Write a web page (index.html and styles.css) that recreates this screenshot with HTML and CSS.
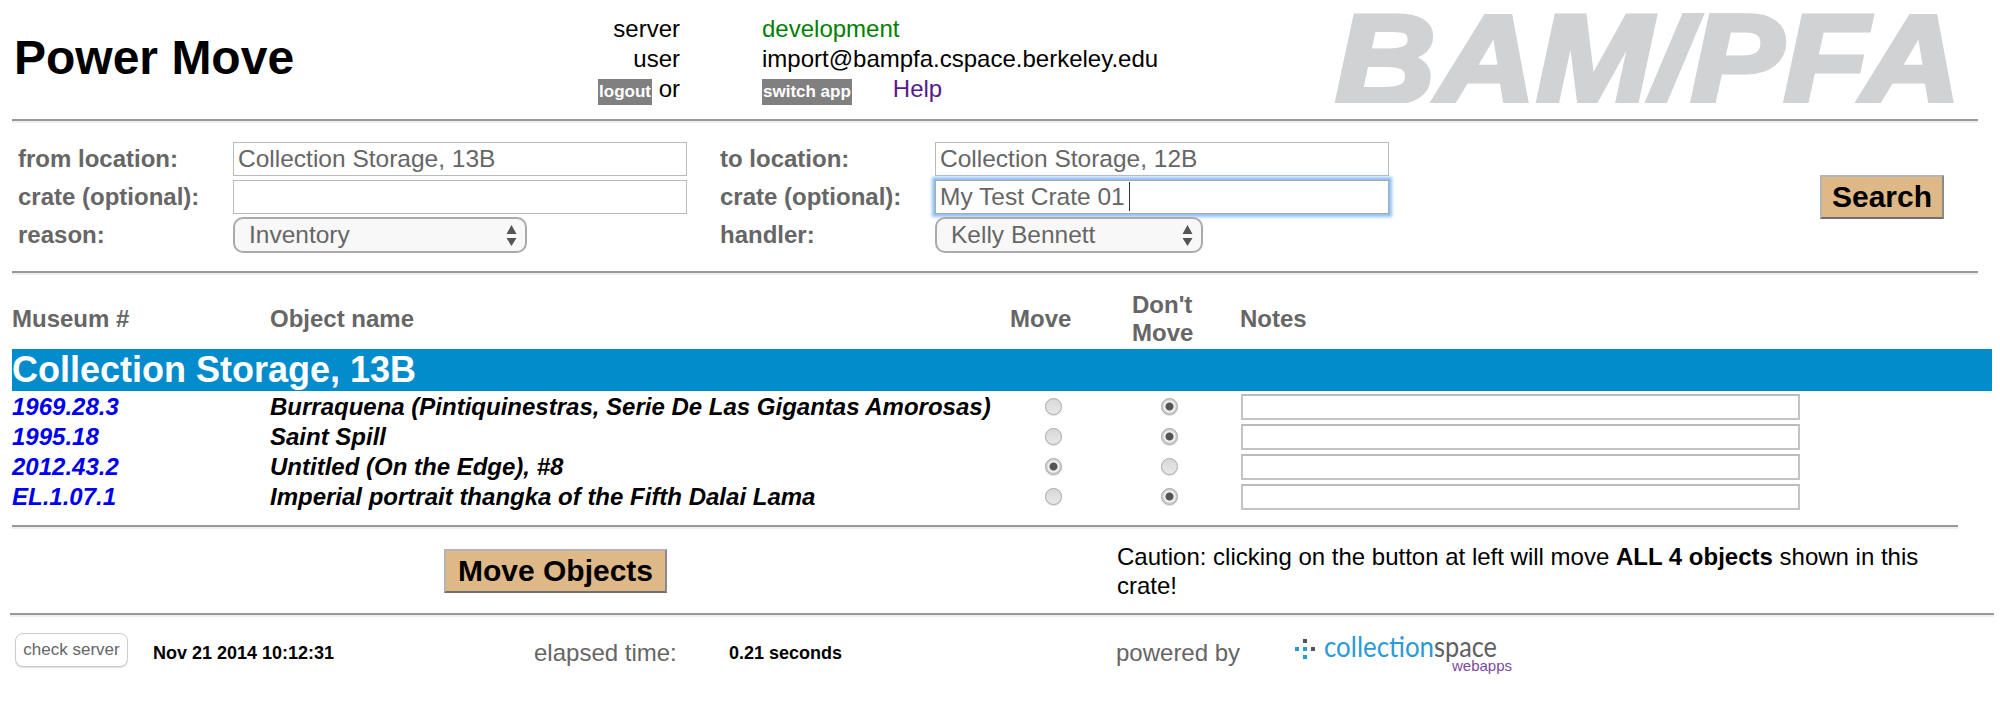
FILE: index.html
```html
<!DOCTYPE html>
<html lang="en">
<head>
<meta charset="utf-8">
<title>Power Move</title>
<link rel="stylesheet" href="styles.css">
</head>
<body>
<header class="header">
  <h1 class="title">Power Move</h1>
  <div class="info">
    <div class="info-label">server</div>
    <div class="info-value dev">development</div>
    <div class="info-label">user</div>
    <div class="info-value">import@bampfa.cspace.berkeley.edu</div>
    <div class="info-label"><a class="chip">logout</a> or</div>
    <div class="info-value"><a class="chip">switch app</a><a class="help">Help</a></div>
  </div>
  <svg class="bam-logo" width="628" height="90" viewBox="0 0 628 90" aria-label="BAM/PFA">
    <text x="1" y="90" textLength="626" lengthAdjust="spacingAndGlyphs" class="bam-text">BAM/PFA</text>
  </svg>
</header>
<hr class="rule rule-top">
<form class="search">
  <label class="field-label">from location:</label>
  <input class="text-input" value="Collection Storage, 13B">
  <label class="field-label field-right">to location:</label>
  <input class="text-input" value="Collection Storage, 12B">
  <span></span>
  <label class="field-label">crate (optional):</label>
  <input class="text-input">
  <label class="field-label field-right">crate (optional):</label>
  <span class="focus-wrap"><input class="text-input focused" value="My Test Crate 01"><i class="caret"></i></span>
  <button type="button" class="action search-btn">Search</button>
  <label class="field-label">reason:</label>
  <span class="select-wrap"><span class="select select-reason">Inventory</span><svg class="updown" width="11" height="21" viewBox="0 0 11 21"><path d="M5.5 0L10.5 9H.5zM5.5 21L.5 13h10z"/></svg></span>
  <label class="field-label field-right">handler:</label>
  <span class="select-wrap"><span class="select select-handler">Kelly Bennett</span><svg class="updown" width="11" height="21" viewBox="0 0 11 21"><path d="M5.5 0L10.5 9H.5zM5.5 21L.5 13h10z"/></svg></span>
</form>
<hr class="rule rule-top">
<table class="objects">
  <colgroup><col class="c-num"><col class="c-name"><col class="c-move"><col class="c-dont"><col class="c-notes"></colgroup>
  <thead>
    <tr><th>Museum #</th><th>Object name</th><th>Move</th><th class="th-dont">Don't<br>Move</th><th>Notes</th></tr>
  </thead>
  <tbody>
    <tr><td colspan="5" class="banner">Collection Storage, 13B</td></tr>
    <tr class="row"><td><a class="num">1969.28.3</a></td><td class="name">Burraquena (Pintiquinestras, Serie De Las Gigantas Amorosas)</td><td><input type="radio" name="r1" class="radio r-move"></td><td><input type="radio" name="r1" class="radio r-dont" checked></td><td><input class="notes"></td></tr>
    <tr class="row"><td><a class="num">1995.18</a></td><td class="name">Saint Spill</td><td><input type="radio" name="r2" class="radio r-move"></td><td><input type="radio" name="r2" class="radio r-dont" checked></td><td><input class="notes"></td></tr>
    <tr class="row"><td><a class="num">2012.43.2</a></td><td class="name">Untitled (On the Edge), #8</td><td><input type="radio" name="r3" class="radio r-move" checked></td><td><input type="radio" name="r3" class="radio r-dont"></td><td><input class="notes"></td></tr>
    <tr class="row"><td><a class="num">EL.1.07.1</a></td><td class="name">Imperial portrait thangka of the Fifth Dalai Lama</td><td><input type="radio" name="r4" class="radio r-move"></td><td><input type="radio" name="r4" class="radio r-dont" checked></td><td><input class="notes"></td></tr>
  </tbody>
</table>
<hr class="rule rule-mid">
<section class="actions">
  <button type="button" class="action move-btn">Move Objects</button>
  <p class="caution">Caution: clicking on the button at left will move <b>ALL 4 objects</b> shown in this crate!</p>
</section>
<hr class="rule rule-bottom">
<footer class="footer">
  <button type="button" class="check">check server</button>
  <span class="stamp stamp-date">Nov 21 2014 10:12:31</span>
  <span class="muted elapsed">elapsed time:</span>
  <span class="stamp seconds">0.21 seconds</span>
  <span class="muted powered">powered by</span>
  <svg class="cs-logo" width="260" height="50" viewBox="0 0 260 50" aria-label="collectionspace webapps">
    <rect x="8" y="9" width="4" height="4" fill="#555"/>
    <rect x="0" y="17" width="4" height="4" fill="#2a9ad6"/>
    <rect x="8" y="17" width="4" height="4" fill="#2a9ad6"/>
    <rect x="16" y="17" width="4" height="4" fill="#555"/>
    <rect x="8" y="25" width="4" height="4" fill="#2a9ad6"/>
    <text x="29" y="27" class="cs-a" textLength="110" lengthAdjust="spacingAndGlyphs">collection</text>
    <text x="139" y="27" class="cs-b" textLength="63" lengthAdjust="spacingAndGlyphs">space</text>
    <text x="157" y="41" class="cs-c">webapps</text>
  </svg>
</footer>
</body>
</html>
```
FILE: styles.css
```css
* { box-sizing: border-box; }
html, body { margin: 0; padding: 0; }
body {
  background: #fff;
  color: #000;
  font-family: "Liberation Sans", Arial, sans-serif;
  font-size: 24px;
  height: 713px;
  overflow: hidden;
}

/* header */
.header { display: flex; height: 119px; }
.title {
  margin: 0;
  width: 598px;
  padding: 34px 0 0 14px;
  font-size: 48px;
  line-height: 48px;
  font-weight: bold;
}
.info {
  display: grid;
  grid-template-columns: 82px 420px;
  column-gap: 82px;
  grid-auto-rows: 30px;
  padding-top: 14px;
  line-height: 30px;
}
.info-label { text-align: right; white-space: nowrap; }
.info-value { white-space: nowrap; }
.dev { color: #008000; }
.chip {
  display: inline-block;
  height: 26px;
  padding: 0 1px;
  margin-top: 5px;
  background: #808080;
  color: #fff;
  font-size: 17px;
  font-weight: bold;
  line-height: 26px;
  vertical-align: top;
}
.help { margin-left: 41px; color: #551a8b; }
.bam-logo { margin: 13px 38px 0 auto; flex: none; overflow: hidden; }
.bam-text {
  font-family: "Liberation Sans", Arial, sans-serif;
  font-size: 126px;
  font-weight: bold;
  font-style: italic;
  fill: #d0d2d3;
  stroke: #d0d2d3;
  stroke-width: 5px;
}

/* rules */
.rule {
  height: 4px;
  margin: 0;
  border: 0;
  border-top: 2px solid #999;
  background: #eee;
}
.rule-top { margin-left: 12px; width: 1966px; }
.rule-mid { margin-left: 12px; width: 1946px; margin-top: 13px; }
.rule-bottom { margin-left: 10px; width: 1984px; }

/* search form */
.search {
  display: grid;
  grid-template-columns: 215px 454px 248px 454px auto;
  grid-template-rows: 34px 34px 34px;
  row-gap: 4px;
  align-items: center;
  height: 148px;
  padding: 19px 0 0 18px;
  color: #666;
}
.field-label { font-weight: bold; white-space: nowrap; }
.field-right { margin-left: 33px; }
.text-input {
  display: block;
  width: 454px;
  height: 34px;
  padding: 0 4px;
  border: 1px solid #bbb;
  background: #fff;
  color: #666;
  font: 24.5px "Liberation Sans", Arial, sans-serif;
  outline: 0;
}
.focus-wrap { position: relative; display: block; }
.focused { box-shadow: 0 0 0 1px #8fc1f7, 0 0 3px 3px #8fc1f7; border-color: #aaa; }
.caret {
  position: absolute;
  left: 194px;
  top: 2px;
  width: 1px;
  height: 29px;
  background: #333;
}
.select-wrap { position: relative; display: block; width: max-content; margin-top: 0; }
.select {
  display: block;
  height: 36px;
  padding-left: 14px;
  border: 2px solid #aaa;
  border-radius: 10px;
  background: #f8f8f8;
  color: #666;
  font-size: 24.5px;
  line-height: 31px;
}
.select-reason { width: 294px; }
.select-handler { width: 268px; }
.updown { position: absolute; right: 10px; top: 8px; fill: #555; }

/* buttons */
.action {
  border-style: solid;
  border-width: 2px;
  border-color: #b5b5b5 #8a8a8a #707070 #b5b5b5;
  background: #deb887;
  color: #000;
  font: bold 30px "Liberation Sans", Arial, sans-serif;
  padding: 0;
}
.search-btn {
  width: 124px;
  height: 44px;
  margin-left: 431px;
  align-self: center;
}
.move-btn { width: 223px; height: 44px; flex: none; }

/* table */
.objects {
  border-collapse: separate;
  border-spacing: 0;
  table-layout: fixed;
  width: 1980px;
  margin: 16px 0 0 12px;
}
.c-num { width: 258px; }
.c-name { width: 740px; }
.c-move { width: 90px; }
.c-dont { width: 140px; }
.c-notes { width: 752px; }
.objects th {
  height: 58px;
  padding: 0 0 2px;
  color: #666;
  font-size: 24px;
  line-height: 28px;
  text-align: left;
  vertical-align: middle;
}
.objects th.th-dont { padding-left: 32px; }
.banner {
  height: 43px;
  padding: 0;
  border-bottom: 1px solid #fff;
  background: #038ccc;
  color: #fff;
  font-size: 36px;
  font-weight: bold;
  line-height: 42px;
}
.row td {
  height: 30px;
  padding: 0;
  font-size: 24px;
  font-weight: bold;
  font-style: italic;
  line-height: 30px;
  white-space: nowrap;
  vertical-align: middle;
}
.num { color: #0000ee; }
.radio {
  display: block;
  appearance: none;
  width: 17px;
  height: 17px;
  margin: -2px 0 0;
  border: 1px solid #a8a8a8;
  border-radius: 50%;
  background: linear-gradient(#d8d8d8, #e8e8e8);
  box-shadow: 0 1px 1px #ddd;
}
.radio:checked { background: radial-gradient(circle, #555 0 3.5px, #f0f0f0 4.5px 5.5px, #cfcfcf 6.5px); }
.r-move { margin-left: 35px; }
.r-dont { margin-left: 61px; }
.notes {
  display: block;
  width: 559px;
  height: 26px;
  margin: 0 0 0 1px;
  border: 2px solid #c4c4c4;
  border-top-color: #bbb;
  background: #fff;
}

/* actions */
.actions {
  display: flex;
  align-items: center;
  height: 84px;
  padding-left: 444px;
}
.caution {
  width: 840px;
  margin: 0 0 0 450px;
  font-size: 24px;
  line-height: 29px;
}

/* footer */
.footer {
  display: flex;
  align-items: center;
  height: 40px;
  margin-top: 16px;
  padding-left: 15px;
}
.check {
  width: 113px;
  height: 34px;
  align-self: flex-start;
  padding: 0;
  border: 1px solid #ccc;
  border-radius: 8px;
  background: #fff;
  box-shadow: 0 1px 1px #ddd;
  color: #666;
  font: 17px "Liberation Sans", Arial, sans-serif;
}
.stamp { font-size: 18px; font-weight: bold; white-space: nowrap; }
.stamp-date { margin-left: 25px; width: 381px; }
.muted { color: #666; white-space: nowrap; }
.elapsed { width: 195px; }
.seconds { width: 387px; }
.powered { width: 179px; }
.cs-logo { align-self: flex-start; margin-top: -3px; flex: none; }
.cs-a, .cs-b { font-family: Lato, sans-serif; font-size: 29px; font-weight: 400; }
.cs-a { fill: #2a9ad6; }
.cs-b { fill: #5f6062; }
.cs-c { font-family: "Liberation Sans", Arial, sans-serif; font-size: 15px; fill: #7a4aa0; }
```
